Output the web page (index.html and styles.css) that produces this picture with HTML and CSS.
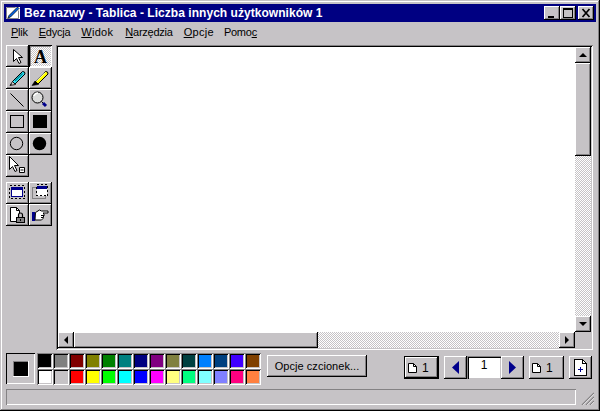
FILE: index.html
```html
<!DOCTYPE html>
<html lang="pl">
<head>
<meta charset="utf-8">
<title>Tablica</title>
<link rel="stylesheet" href="styles.css">
</head>
<body>
<div class="window">
  <header class="titlebar">
    <svg class="app-icon" width="16" height="14" viewBox="0 0 16 14">
      <path d="M1 1h14v12H1z" fill="#fff"/>
      <path d="M1.500 12.500v-11h9M1.500 12.500h12v-8" fill="none" stroke="#848284"/>
      <path d="M3 12l1-2.500 8.500-8.500 1.500 1.500-8.500 8.500z" fill="#0060e8" stroke="#000" stroke-width=".7"/>
    </svg>
    <span class="title-text">Bez nazwy - Tablica - Liczba innych użytkowników 1</span>
    <div class="caption-btns">
      <button class="cap raised"><svg width="16" height="14" shape-rendering="crispEdges"><path d="M4 10h6v2H4z"/></svg></button>
      <button class="cap raised"><svg width="16" height="14" shape-rendering="crispEdges"><path d="M3 2h10v10H3zM4 4v7h8V4z" fill-rule="evenodd"/></svg></button>
      <button class="cap raised cap-close"><svg width="16" height="14"><path d="M4.500 3l7 8M11.500 3l-7 8" stroke="#000" stroke-width="1.700"/></svg></button>
    </div>
  </header>

  <nav class="menubar">
    <span class="menu m1"><u>P</u>lik</span>
    <span class="menu m2"><u>E</u>dycja</span>
    <span class="menu m3"><u>W</u>idok</span>
    <span class="menu m4"><u>N</u>arzędzia</span>
    <span class="menu m5"><u>O</u>pcje</span>
    <span class="menu m6">Pomo<u>c</u></span>
  </nav>

  <main class="main">
    <aside class="tools">
      <div class="tool-grid">
        <button class="tool raised"><svg width="23" height="22"><path d="M7.500 4.500v12l3-3 2.500 5 2-1-2.500-5h4z" fill="#fff" stroke="#000"/></svg></button>
        <button class="tool pressed"><span class="tool-a">A</span></button>
        <button class="tool raised"><svg width="23" height="22"><path d="M6.500 14.500l10-10 2 .5 .5 2-10 10z" fill="#30e0f0" stroke="#000"/><path d="M9 14l7.500-7.500" stroke="#008898" stroke-width="1.200"/><path d="M4 18.500l2.500-4 3 3z" fill="#c8c8c8" stroke="#000" stroke-width=".8"/><path d="M4 18.500l1.200-2 .8.800z"/></svg></button>
        <button class="tool raised"><svg width="23" height="22"><path d="M6.500 14.500l10-10 2 .5 .5 2-10 10z" fill="#ff0" stroke="#000"/><path d="M7.500 14l8.500-8.500" stroke="#fff"/><path d="M3 18.500l3-4.500 3.500 3.500z" stroke="#000" stroke-width=".6"/></svg></button>
        <button class="tool raised"><svg width="23" height="22"><path d="M4.500 4.500l13 13" stroke="#000"/></svg></button>
        <button class="tool raised"><svg width="23" height="22"><circle cx="8.500" cy="8.500" r="5.500" fill="#dcdcdc" stroke="#000"/><path d="M5 7q1-3 4-3" stroke="#fff" fill="none" stroke-width="1.400"/><path d="M12.500 12.500l1.500 1.500" stroke="#000"/><path d="M14 14l3 3" stroke="#00008b" stroke-width="3"/></svg></button>
        <button class="tool raised"><svg width="23" height="22" shape-rendering="crispEdges"><rect x="4.500" y="4.500" width="13" height="12" fill="none" stroke="#000"/></svg></button>
        <button class="tool raised"><svg width="23" height="22" shape-rendering="crispEdges"><rect x="4" y="4" width="14" height="13"/></svg></button>
        <button class="tool raised"><svg width="23" height="22"><circle cx="10.500" cy="10.500" r="6.200" fill="none" stroke="#000"/></svg></button>
        <button class="tool raised"><svg width="23" height="22"><circle cx="10.500" cy="10.500" r="6.700"/></svg></button>
        <button class="tool raised"><svg width="23" height="22"><path d="M3.500 1.500v13l3-3 2.500 5 2-1-2.500-5h4z" fill="#fff" stroke="#000"/><path d="M13.500 12.500h5v5h-5z" fill="#fff" stroke="#000"/><path d="M14.500 15h3" stroke="#000"/></svg></button>
      </div>
      <div class="tool-grid tool-grid-b">
        <button class="tool raised"><svg width="23" height="22" shape-rendering="crispEdges"><rect x="3.500" y="3.500" width="15" height="13" fill="none" stroke="#000" stroke-dasharray="2 2"/><rect x="5.500" y="5.500" width="11" height="9" fill="#fff" stroke="#00008b"/><rect x="5" y="5" width="12" height="3" fill="#00008b"/></svg></button>
        <button class="tool raised"><svg width="23" height="22" shape-rendering="crispEdges"><rect x="3.500" y="5.500" width="13" height="11" fill="none" stroke="#848284"/><rect x="8" y="4" width="10" height="10" fill="#fff"/><rect x="8" y="4" width="10" height="3" fill="#00008b"/><rect x="7.500" y="2.500" width="11" height="11" fill="none" stroke="#000" stroke-dasharray="2 2"/></svg></button>
        <button class="tool raised"><svg width="23" height="22"><path d="M4.500 3.500h6l3 3v11h-9z" fill="#fff" stroke="#000"/><path d="M10.500 3.500v3h3" fill="none" stroke="#000"/><path d="M12.500 13v-2a2 2 0 014 0v2" fill="#c6c3c6" stroke="#000" stroke-width="1.200"/><rect x="10.500" y="13.500" width="8" height="5" fill="#848284" stroke="#000"/><path d="M14.500 15v2" stroke="#000"/></svg></button>
        <button class="tool raised"><svg width="23" height="22"><path d="M3 8h3v9H3z" fill="#00008b"/><path d="M6.500 8.500l4-2.500 2 1h6.500v2h-5l1 1v2l-1 1v1.500l-1.500 1.500h-6.500z" fill="#fff" stroke="#000"/><path d="M12 11.500h3M12 13.500h2.500" stroke="#000"/></svg></button>
      </div>
    </aside>

    <section class="board-frame">
      <div class="board-top">
        <div class="canvas"></div>
        <div class="vscroll">
          <button class="sb-btn raised"><svg width="16" height="16"><path d="M4 10h8L8 6z"/></svg></button>
          <div class="v-thumb raised"></div>
          <div class="v-track checker"></div>
          <button class="sb-btn raised"><svg width="16" height="16"><path d="M4 6h8l-4 4z"/></svg></button>
        </div>
      </div>
      <div class="hscroll">
        <button class="sb-btn raised"><svg width="16" height="16"><path d="M10 4v8L6 8z"/></svg></button>
        <div class="h-thumb raised"></div>
        <div class="h-track checker"></div>
        <button class="sb-btn raised"><svg width="16" height="16"><path d="M6 4v8l4-4z"/></svg></button>
      </div>
    </section>
  </main>

  <section class="bottom">
    <div class="current-color"><span class="current-swatch"></span></div>
    <div class="palette">
      <i class="c c-000"></i><i class="c c-808080"></i><i class="c c-800000"></i><i class="c c-808000"></i><i class="c c-008000"></i><i class="c c-008080"></i><i class="c c-000080"></i><i class="c c-800080"></i><i class="c c-808040"></i><i class="c c-004040"></i><i class="c c-0080ff"></i><i class="c c-004080"></i><i class="c c-4000ff"></i><i class="c c-804000"></i>
      <i class="c c-fff"></i><i class="c c-c0"></i><i class="c c-f00"></i><i class="c c-ff0"></i><i class="c c-0f0"></i><i class="c c-0ff"></i><i class="c c-00f"></i><i class="c c-f0f"></i><i class="c c-ffff80"></i><i class="c c-00ff80"></i><i class="c c-80ffff"></i><i class="c c-8080ff"></i><i class="c c-ff0080"></i><i class="c c-ff8040"></i>
    </div>
    <button class="font-btn">Opcje czcionek...</button>
    <button class="page-btn page-first"><svg class="doc" width="9" height="10"><path d="M.5.500h5l3 3v6h-8z" fill="#fff" stroke="#000"/><path d="M5.500.500v3h3" fill="none" stroke="#000"/></svg><span>1</span></button>
    <div class="pager">
      <button class="nav raised"><svg width="23" height="23"><path d="M15 5v13L8 11.500z" fill="#00008b"/></svg></button>
      <div class="page-field">1</div>
      <button class="nav raised"><svg width="23" height="23"><path d="M8 5v13l7-6.500z" fill="#00008b"/></svg></button>
    </div>
    <button class="page-btn page-last raised"><svg class="doc" width="9" height="10"><path d="M.5.500h5l3 3v6h-8z" fill="#fff" stroke="#000"/><path d="M5.500.500v3h3" fill="none" stroke="#000"/></svg><span>1</span></button>
    <button class="add raised"><svg width="23" height="23" shape-rendering="crispEdges"><path d="M5.500 3.500h8l4 4v12h-12z" fill="#fff" stroke="#000"/><path d="M13.500 3.500v4h4" fill="none" stroke="#000"/><path d="M9 13h5M11 11v5" stroke="#00008b" fill="none"/></svg></button>
  </section>

  <footer class="statusrow">
    <div class="status"></div>
    <svg class="grip" width="13" height="13"><path d="M1 13L13 1M5 13l8-8M9 13l4-4" stroke="#848284" stroke-width="1.400"/><path d="M2 13L13 2M6 13l7-7M10 13l3-3" stroke="#fff" stroke-width=".6"/></svg>
  </footer>
</div>
</body>
</html>
```
FILE: styles.css
```css
:root { --face: #c6c3c6; --dark: #848284; }
* { box-sizing: border-box; }
html, body { margin: 0; padding: 0; }
body { width: 600px; height: 411px; overflow: hidden; background: var(--face); font-family: "Liberation Sans", Arial, sans-serif; font-size: 12px; color: #000; }
button { margin: 0; padding: 0; border: 0; background: var(--face); font: inherit; color: inherit; display: block; }
svg { display: block; }

.window { width: 600px; height: 411px; padding: 4px; display: flex; flex-direction: column; background: var(--face);
  box-shadow: inset -1px -1px #000, inset 1px 1px var(--face), inset -2px -2px var(--dark), inset 2px 2px #fff; }
.raised { box-shadow: inset -1px -1px #000, inset 1px 1px #fff, inset -2px -2px var(--dark); }
.pressed { box-shadow: inset 1px 1px #000, inset -1px -1px #fff, inset 2px 2px var(--dark); }
.checker { background: conic-gradient(#fff 25%, var(--face) 0 50%, #fff 0 75%, var(--face) 0) 0 0 / 2px 2px; }

.titlebar { height: 18px; background: #000082; color: #fff; display: flex; align-items: center; padding: 0 2px 0 1px; flex: none; }
.app-icon { margin-right: 3px; }
.title-text { font-weight: 700; font-size: 12px; letter-spacing: .04px; white-space: nowrap; }
.caption-btns { margin-left: auto; display: flex; }
.cap { width: 16px; height: 14px; }
.cap-close { margin-left: 2px; }

.menubar { height: 20px; display: flex; align-items: center; padding-left: 7px; flex: none; font-size: 11px; letter-spacing: -.25px; }
.menu { white-space: nowrap; }
.m2 { margin-left: 11px; } .m3 { margin-left: 11px; letter-spacing: .3px; } .m4 { margin-left: 12px; } .m5 { margin-left: 11px; letter-spacing: .3px; } .m6 { margin-left: 10px; }

.main { display: flex; margin: 3px 0 0 2px; flex: none; height: 305px; }
.tools { width: 46px; margin-right: 4px; flex: none; }
.tool-grid { display: grid; grid-template-columns: 23px 23px; grid-auto-rows: 22px; }
.tool-grid-b { margin-top: 5px; }
.tool { width: 23px; height: 22px; }
.tool.pressed { background: conic-gradient(#fff 25%, var(--face) 0 50%, #fff 0 75%, var(--face) 0) 0 0 / 2px 2px; display: flex; align-items: center; justify-content: center; padding-top: 2px; }
.tool-a { font-family: "Liberation Serif", serif; font-weight: 700; font-size: 18px; line-height: 18px; }

.board-frame { width: 537px; height: 305px; padding: 2px; background: var(--face); display: flex; flex-direction: column;
  box-shadow: inset 1px 1px var(--dark), inset -1px -1px #fff, inset 2px 2px #000; }
.board-top { display: flex; height: 285px; flex: none; }
.canvas { width: 517px; background: #fff; flex: none; }
.vscroll { width: 16px; display: flex; flex-direction: column; flex: none; }
.sb-btn { width: 16px; height: 16px; flex: none; }
.v-thumb { height: 93px; background: var(--face); flex: none; }
.v-track { flex: 1; }
.hscroll { display: flex; height: 16px; width: 533px; flex: none; padding-right: 16px; }
.h-thumb { width: 244px; background: var(--face); flex: none; }
.h-track { flex: 1; }

.bottom { display: flex; margin: 3px 0 0 2px; height: 32px; flex: none; align-items: flex-start; }
.current-color { width: 29px; height: 31px; display: flex; align-items: center; justify-content: center;
  box-shadow: inset 1px 1px #000, inset -1px -1px #fff; }
.current-swatch { width: 16px; height: 16px; background: #000; box-shadow: inset -1px -1px #fff, inset 1px 1px var(--dark); }
.palette { margin-left: 2px; display: grid; grid-template-columns: repeat(14, 16px); grid-auto-rows: 16px; }
.c { display: block; box-shadow: inset 1px 1px var(--dark), inset -1px -1px #fff, inset 2px 2px #000, inset -2px -2px var(--face); }
.c-000 { background: #000; } .c-808080 { background: #808080; } .c-800000 { background: #800000; } .c-808000 { background: #808000; }
.c-008000 { background: #008000; } .c-008080 { background: #008080; } .c-000080 { background: #000080; } .c-800080 { background: #800080; }
.c-808040 { background: #808040; } .c-004040 { background: #004040; } .c-0080ff { background: #0080ff; } .c-004080 { background: #004080; }
.c-4000ff { background: #4000ff; } .c-804000 { background: #804000; } .c-fff { background: #fff; } .c-c0 { background: var(--face); }
.c-f00 { background: #f00; } .c-ff0 { background: #ff0; } .c-0f0 { background: #0f0; } .c-0ff { background: #0ff; } .c-00f { background: #00f; }
.c-f0f { background: #f0f; } .c-ffff80 { background: #ffff80; } .c-00ff80 { background: #00ff80; } .c-80ffff { background: #80ffff; }
.c-8080ff { background: #8080ff; } .c-ff0080 { background: #ff0080; } .c-ff8040 { background: #ff8040; }

.font-btn { width: 100px; height: 22px; margin: 2px 0 0 6px; font-size: 11px; letter-spacing: .05px; white-space: nowrap;
  box-shadow: inset -1px -1px #000, inset 1px 1px #fff, inset -2px -2px var(--dark); }
.page-btn { width: 35px; height: 23px; margin-top: 3px; display: flex; align-items: center; flex: none; }
.page-btn span { margin-left: 5px; }
.page-first { margin-left: 37px; padding-left: 4px; box-shadow: inset 0 0 0 1px #000, inset -2px -2px #000, inset 2px 2px #fff, inset -3px -3px var(--dark); }
.pager { display: flex; margin: 3px 0 0 5px; }
.nav { width: 23px; height: 23px; }
.page-field { width: 34px; height: 23px; background: #fff; text-align: center; line-height: 19px; box-shadow: inset 1px 1px var(--dark), inset 2px 2px #000, inset -1px -1px var(--face); }
.page-last { margin-left: 5px; padding-left: 3px; }
.add { width: 23px; height: 23px; margin: 3px 0 0 5px; }

.statusrow { display: flex; margin: 4px 0 0 2px; align-items: flex-end; flex: none; }
.status { width: 570px; height: 16px; box-shadow: inset 1px 1px var(--dark), inset -1px -1px #fff; }
.grip { margin-left: 5px; }
```
